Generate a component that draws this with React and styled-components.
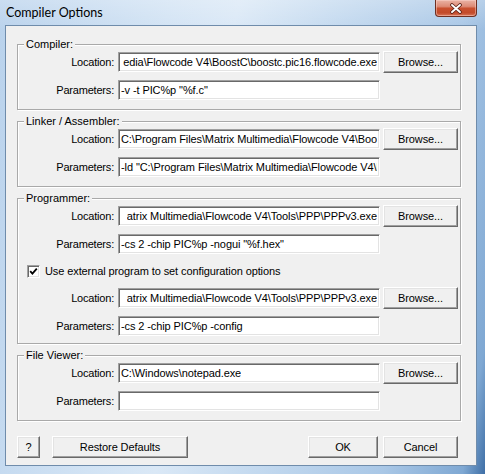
import React from "react";
import styled, { createGlobalStyle } from "styled-components";

const GlobalStyle = createGlobalStyle`
  html, body { margin: 0; padding: 0; }
  body {
    width: 485px;
    height: 474px;
    overflow: hidden;
    font-family: "Liberation Sans", Arial, sans-serif;
  }
`;

const Window = styled.div`
  width: 485px;
  height: 474px;
  box-sizing: border-box;
  display: flex;
  flex-direction: column;
  background:
    linear-gradient(180deg, rgba(255,255,255,0.25) 0%, rgba(255,255,255,0) 30px),
    linear-gradient(100deg, #b9d2ec 0%, #d2e3f4 30%, #dae8f6 42%, #c3d9ef 60%, #a9c7e6 82%, #7fa8d3 96%, #3f6fa6 100%);
`;

const TitleBar = styled.div`
  height: 25px;
  flex-shrink: 0;
  display: flex;
  align-items: flex-start;
`;

const Title = styled.div`
  margin: 5px 0 0 6px;
  font-family: "Lato", "Noto Sans", sans-serif;
  font-size: 12.5px;
  line-height: 15px;
  color: #000;
`;

const CloseButton = styled.div`
  margin-left: auto;
  margin-right: 8px;
  width: 42px;
  height: 17px;
  box-sizing: border-box;
  border: 1px solid #6e2f22;
  border-top: none;
  border-radius: 0 0 4px 4px;
  background: linear-gradient(180deg, #eab3a5 0%, #dd8b76 40%, #c9502f 52%, #c24a2a 80%, #d9765a 100%);
  box-shadow: inset 0 0 0 1px rgba(255, 220, 210, 0.45);
  display: flex;
  align-items: center;
  justify-content: center;
`;

const Client = styled.div`
  flex: 1;
  margin: 0 8px 8px 5px;
  background: #f0f0f0;
  border: 1px solid #6f8cab;
  display: flex;
  flex-direction: column;
  padding: 12px 15px 0 11px;
`;

const Group = styled.fieldset`
  margin: 0 0 5px 0;
  padding: 0 0 ${(p) => p.$pb ?? 8}px 0;
  min-width: 0;
  border: 1px solid #a9a9a9;
  box-shadow: inset 1px 1px 0 #fff, 1px 1px 0 #fff;
`;

const Legend = styled.legend`
  margin-left: 6px;
  padding: 0 2px;
  font-size: 11px;
  line-height: 13px;
  color: #000;
  background: #f0f0f0;
`;

const Rows = styled.div`
  display: flex;
  flex-direction: column;
  gap: 6px;
`;

const Row = styled.div`
  display: flex;
  align-items: center;
  height: 22px;
`;

const Label = styled.div`
  width: 96px;
  margin-right: 4px;
  text-align: right;
  font-size: 11px;
  letter-spacing: -0.2px;
  color: #000;
  white-space: nowrap;
`;

const TextBox = styled.div`
  width: 262px;
  height: 20px;
  box-sizing: border-box;
  background: #fff;
  border: 1px solid;
  border-color: #a0a0a0 #fff #fff #a0a0a0;
  box-shadow: inset 1px 1px 0 #696969, inset -1px -1px 0 #e3e3e3;
  padding: 0 2px 0 2px;
  display: flex;
  align-items: center;
  justify-content: ${(p) => (p.$end ? "flex-end" : "flex-start")};
  overflow: hidden;
`;

const BoxText = styled.span`
  flex: 0 1 auto;
  min-width: 0;
  overflow: hidden;
  white-space: nowrap;
  font-size: 11px;
  letter-spacing: -0.1px;
  color: #000;
`;

const Button = styled.div`
  width: ${(p) => p.$w}px;
  height: 22px;
  margin-left: ${(p) => p.$ml || 0}px;
  box-sizing: border-box;
  background: #f0f0f0;
  border: 1px solid;
  border-color: #fff #696969 #696969 #fff;
  box-shadow: inset -1px -1px 0 #a0a0a0, inset 1px 1px 0 #e3e3e3;
  display: flex;
  align-items: center;
  justify-content: center;
  font-size: 11px;
  letter-spacing: -0.1px;
  color: #000;
  flex-shrink: 0;
`;

const CheckRow = styled.div`
  display: flex;
  align-items: center;
  gap: 5px;
  height: 20px;
  padding-left: 9px;
  font-size: 11px;
  letter-spacing: -0.1px;
  color: #000;
`;

const CheckBox = styled.div`
  width: 13px;
  height: 13px;
  box-sizing: border-box;
  background: #fff;
  border: 1px solid;
  border-color: #a0a0a0 #fff #fff #a0a0a0;
  box-shadow: inset 1px 1px 0 #696969, inset -1px -1px 0 #e3e3e3;
  display: flex;
  align-items: center;
  justify-content: center;
`;

const Footer = styled.div`
  display: flex;
  align-items: center;
  margin-top: 10px;
  padding-right: 3px;
`;

const Spacer = styled.div`
  flex: 1;
`;

const Field = ({ label, value, end, browse }) => (
  <Row>
    <Label>{label}</Label>
    <TextBox $end={end}>
      <BoxText>{value}</BoxText>
    </TextBox>
    {browse && (
      <Button $w={75} $ml={3}>
        Browse...
      </Button>
    )}
  </Row>
);

export default function App() {
  return (
    <>
      <GlobalStyle />
      <Window>
        <TitleBar>
          <Title>Compiler Options</Title>
          <CloseButton>
            <svg width="14" height="11" viewBox="0 0 14 11">
              <path d="M3 2 L11 9 M11 2 L3 9" stroke="#5a2016" strokeWidth="3.6" strokeLinecap="round" fill="none" />
              <path d="M3 2 L11 9 M11 2 L3 9" stroke="#fff" strokeWidth="1.9" strokeLinecap="round" fill="none" />
            </svg>
          </CloseButton>
        </TitleBar>
        <Client>
          <Group>
            <Legend>Compiler:</Legend>
            <Rows>
              <Field
                label="Location:"
                value="edia\Flowcode V4\BoostC\boostc.pic16.flowcode.exe"
                end
                browse
              />
              <Field label="Parameters:" value={'-v -t PIC%p "%f.c"'} />
            </Rows>
          </Group>
          <Group>
            <Legend>Linker / Assembler:</Legend>
            <Rows>
              <Field
                label="Location:"
                value="C:\Program Files\Matrix Multimedia\Flowcode V4\BoostC\boostlink.pic.exe"
                browse
              />
              <Field
                label="Parameters:"
                value={'-ld "C:\\Program Files\\Matrix Multimedia\\Flowcode V4\\lib"'}
              />
            </Rows>
          </Group>
          <Group $pb={6}>
            <Legend>Programmer:</Legend>
            <Rows>
              <Field
                label="Location:"
                value="atrix Multimedia\Flowcode V4\Tools\PPP\PPPv3.exe"
                end
                browse
              />
              <Field label="Parameters:" value={'-cs 2 -chip PIC%p -nogui "%f.hex"'} />
              <CheckRow>
                <CheckBox>
                  <svg width="9" height="9" viewBox="0 0 9 9">
                    <path d="M1.2 4.2 L3.4 6.6 L7.8 1.6" stroke="#000" strokeWidth="1.8" fill="none" />
                  </svg>
                </CheckBox>
                Use external program to set configuration options
              </CheckRow>
              <Field
                label="Location:"
                value="atrix Multimedia\Flowcode V4\Tools\PPP\PPPv3.exe"
                end
                browse
              />
              <Field label="Parameters:" value="-cs 2 -chip PIC%p -config" />
            </Rows>
          </Group>
          <Group>
            <Legend>File Viewer:</Legend>
            <Rows>
              <Field label="Location:" value="C:\Windows\notepad.exe" browse />
              <Field label="Parameters:" value="" />
            </Rows>
          </Group>
          <Footer>
            <Button $w={23}>?</Button>
            <Button $w={136} $ml={12}>
              Restore Defaults
            </Button>
            <Spacer />
            <Button $w={70}>OK</Button>
            <Button $w={75} $ml={5}>
              Cancel
            </Button>
          </Footer>
        </Client>
      </Window>
    </>
  );
}
